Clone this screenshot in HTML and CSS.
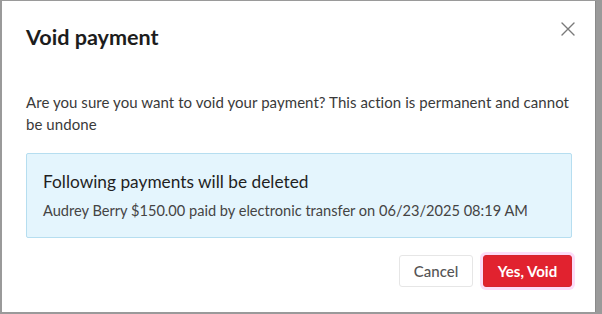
FILE: index.html
```html
<!DOCTYPE html>
<html lang="en">
<head>
<meta charset="utf-8">
<title>Void payment</title>
<link rel="stylesheet" href="styles.css">
</head>
<body>
<div class="dialog" role="dialog" aria-labelledby="dlg-title">
  <button class="close" aria-label="Close">
    <svg width="14" height="14" viewBox="0 0 14 14"><path d="M1 1L13 13M13 1L1 13" stroke="#7a7a7a" stroke-width="1.4" fill="none" stroke-linecap="round"/></svg>
  </button>
  <h2 class="title" id="dlg-title">Void payment</h2>
  <p class="message">Are you sure you want to void your payment? This action is permanent and cannot be undone</p>
  <div class="notice">
    <div class="notice-title">Following payments will be deleted</div>
    <div class="notice-item">Audrey Berry $150.00 paid by electronic transfer on 06/23/2025 08:19 AM</div>
  </div>
  <div class="actions">
    <button class="btn btn-cancel">Cancel</button>
    <button class="btn btn-danger">Yes, Void</button>
  </div>
</div>
</body>
</html>
```

FILE: styles.css
```css
* { box-sizing: border-box; }
html, body { margin: 0; padding: 0; }
body {
  background: #9a9a9a;
  width: 602px;
  height: 314px;
  overflow: hidden;
  font-family: "Lato", "Liberation Sans", sans-serif;
  color: #222;
}
.dialog {
  position: relative;
  margin: 1px 6px 2px 2px;
  height: 311px;
  background: #fff;
  border-right: 1px solid #8a8a8a;
  padding: 22px 23px 0 24px;
}
.close {
  position: absolute;
  top: 21px;
  right: 20px;
  width: 14px;
  height: 14px;
  padding: 0;
  border: 0;
  background: transparent;
  display: flex;
}
.title {
  margin: 0;
  font-size: 21.6px;
  line-height: 28px;
  font-weight: 700;
  color: #1d1d1d;
}
.message {
  margin: 40px -6px 0 0;
  font-size: 15px;
  letter-spacing: 0.06px;
  line-height: 22px;
  color: #3a3a3a;
}
.notice {
  margin-top: 18px;
  background: #e4f5fd;
  border: 1px solid #b6def0;
  border-radius: 2px;
  padding: 16px 16px 15px;
}
.notice-title {
  font-size: 17.3px;
  line-height: 24px;
  color: #1f1f1f;
}
.notice-item {
  margin-top: 6px;
  font-size: 14.6px;
  line-height: 22px;
  color: #444;
}
.actions {
  display: flex;
  justify-content: flex-end;
  gap: 10px;
  margin-top: 17px;
}
.btn {
  height: 32px;
  border-radius: 3px;
  font-family: inherit;
  font-size: 15px;
  padding: 0;
  cursor: pointer;
}
.btn-cancel {
  width: 74px;
  background: #fff;
  border: 1px solid #e6e6e6;
  color: #555;
  font-weight: 500;
}
.btn-danger {
  width: 89px;
  background: #e1222f;
  border: 1px solid #d42530;
  color: #fff;
  font-weight: 700;
  box-shadow: 0 0 0 3px #fcdcf8;
}
```
